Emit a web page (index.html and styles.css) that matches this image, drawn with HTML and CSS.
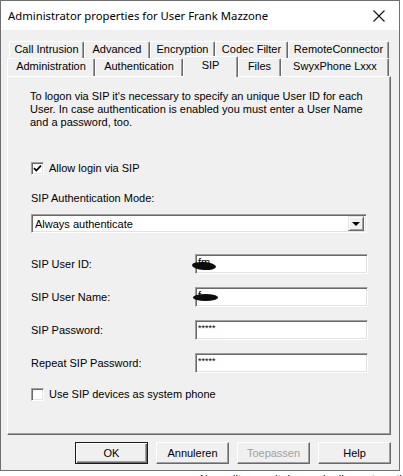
FILE: index.html
```html
<!DOCTYPE html>
<html lang="en">
<head>
<meta charset="UTF-8">
<title>Administrator properties for User Frank Mazzone</title>
<link rel="stylesheet" href="styles.css">
</head>
<body>
  <div class="window">
    <div class="titlebar">
      <span class="title">Administrator properties for User Frank Mazzone</span>
      <svg class="close" width="12" height="12" viewBox="0 0 12 12">
        <path d="M0.5 0.5L11.5 11.5M11.5 0.5L0.5 11.5" stroke="#111" stroke-width="1.1" fill="none"/>
      </svg>
    </div>

    <div class="client">
      <div class="tabrow back">
        <div class="tab" style="width:75px">Call Intrusion</div>
        <div class="tab" style="width:66px">Advanced</div>
        <div class="tab" style="width:65px">Encryption</div>
        <div class="tab" style="width:73px">Codec Filter</div>
        <div class="tab" style="width:101px">RemoteConnector</div>
      </div>
      <div class="tabrow front">
        <div class="tab" style="width:88px">Administration</div>
        <div class="tab" style="width:88px">Authentication</div>
        <div class="tab selected" style="width:55px">SIP</div>
        <div class="tab" style="width:43px">Files</div>
        <div class="tab" style="width:108px">SwyxPhone Lxxx</div>
      </div>

      <div class="panel">
        <p class="intro">To logon via SIP it's necessary to specify an unique User ID for each<br>User. In case authentication is enabled you must enter a User Name<br>and a password, too.</p>

        <label class="check first">
          <span class="box">
            <svg width="9" height="9" viewBox="0 0 9 9"><path d="M1 4.2L3.3 6.6L8 1.6" stroke="#000" stroke-width="1.7" fill="none"/></svg>
          </span>
          Allow login via SIP
        </label>

        <div class="mode-label">SIP Authentication Mode:</div>
        <div class="combo">
          <span class="combo-text">Always authenticate</span>
          <span class="combo-btn"><span class="arrow"></span></span>
        </div>

        <div class="field first-field">
          <span class="label">SIP User ID:</span>
          <span class="input">fm<span class="blob one"></span></span>
        </div>
        <div class="field">
          <span class="label">SIP User Name:</span>
          <span class="input">f<span class="blob two"></span></span>
        </div>
        <div class="field">
          <span class="label">SIP Password:</span>
          <span class="input stars">*****</span>
        </div>
        <div class="field">
          <span class="label">Repeat SIP Password:</span>
          <span class="input stars">*****</span>
        </div>

        <label class="check last">
          <span class="box"></span>
          Use SIP devices as system phone
        </label>
      </div>

      <div class="buttons">
        <button class="btn default">OK</button>
        <button class="btn">Annuleren</button>
        <button class="btn disabled">Toepassen</button>
        <button class="btn">Help</button>
      </div>
    </div>
  </div>
  <div class="behind">Normaliter wordt deze gebruiker automatisch</div>
</body>
</html>
```

FILE: styles.css
```css
body {
    margin: 0;
    background: #fff;
    font-family: "Liberation Sans", Arial, sans-serif;
    font-size: 11px;
    color: #000;
    height: 476px;
    overflow: hidden;
}
.window {
    width: 398px;
    border: 1px solid #6f6f6f;
    background: #f0f0f0;
}
.titlebar {
    height: 29px;
    background: #fff;
    display: flex;
    align-items: center;
    justify-content: space-between;
    padding: 0 14px 0 7px;
}
.title {
    font-family: "Noto Sans", sans-serif;
    font-size: 11.3px;
    color: #000;
}
.client {
    padding: 11px 8px 6px 6px;
}
.tabrow {
    display: flex;
}
.tabrow.back {
    height: 17px;
    margin-left: 2px;
}
.tabrow.front {
    height: 18px;
    align-items: flex-end;
}
.tab {
    box-sizing: border-box;
    height: 100%;
    border-top: 1px solid #fff;
    border-left: 1px solid #fff;
    border-right: 1px solid #696969;
    box-shadow: inset -1px 0 0 #a0a0a0;
    border-radius: 2px 2px 0 0;
    background: #f0f0f0;
    text-align: center;
    line-height: 15px;
    white-space: nowrap;
}
.tab.selected {
    position: relative;
    z-index: 1;
    height: 21px;
    margin-bottom: -1px;
    padding-top: 1px;
}
.panel {
    box-sizing: border-box;
    width: 384px;
    height: 359px;
    border: 1px solid;
    border-color: #fff #696969 #696969 #fff;
    box-shadow: inset -1px -1px 0 #a0a0a0;
    padding: 13px 22px 0 23px;
}
.intro {
    margin: 0 0 0 -1px;
    line-height: 13px;
}
.check {
    display: flex;
    align-items: center;
    gap: 5px;
    height: 13px;
    line-height: 13px;
}
.check.first {
    margin-top: 33px;
}
.check.last {
    margin-top: 15px;
}
.box {
    box-sizing: border-box;
    width: 13px;
    height: 13px;
    background: #fff;
    border: 1px solid;
    border-color: #a0a0a0 #fff #fff #a0a0a0;
    box-shadow: inset 1px 1px 0 #696969, inset -1px -1px 0 #e3e3e3;
    display: flex;
    align-items: center;
    justify-content: center;
}
.mode-label {
    margin-top: 17px;
    line-height: 13px;
}
.combo {
    box-sizing: border-box;
    margin-top: 9px;
    width: 336px;
    height: 19px;
    background: #fff;
    border: 1px solid;
    border-color: #a0a0a0 #fff #fff #a0a0a0;
    box-shadow: inset 1px 1px 0 #696969, inset -1px -1px 0 #e3e3e3;
    display: flex;
    align-items: center;
    padding: 2px 2px 2px 3px;
}
.combo-text {
    flex: 1;
}
.combo-btn {
    box-sizing: border-box;
    width: 16px;
    height: 15px;
    background: #f0f0f0;
    border: 1px solid;
    border-color: #e3e3e3 #696969 #696969 #e3e3e3;
    box-shadow: inset 1px 1px 0 #fff, inset -1px -1px 0 #a0a0a0;
    display: flex;
    align-items: center;
    justify-content: center;
}
.arrow {
    width: 0;
    height: 0;
    border-left: 4px solid transparent;
    border-right: 4px solid transparent;
    border-top: 4px solid #000;
}
.field {
    display: flex;
    align-items: center;
    height: 20px;
    margin-top: 13px;
}
.field.first-field {
    margin-top: 21px;
}
.label {
    width: 164px;
}
.input {
    position: relative;
    box-sizing: border-box;
    width: 173px;
    height: 20px;
    background: #fff;
    border: 1px solid;
    border-color: #a0a0a0 #fff #fff #a0a0a0;
    box-shadow: inset 1px 1px 0 #696969, inset -1px -1px 0 #e3e3e3;
    padding: 1px 0 0 2px;
    line-height: 13px;
}
.input.stars {
    font-size: 9px;
    padding-top: 1px;
}
.blob {
    position: absolute;
    background: #0c0c0c;
    border-radius: 50%;
}
.blob.one {
    left: -4px;
    top: 7px;
    width: 24px;
    height: 8px;
    transform: rotate(4deg);
}
.blob.two {
    left: -3px;
    top: 6px;
    width: 25px;
    height: 7px;
}
.buttons {
    display: flex;
    justify-content: flex-end;
    gap: 8px;
    margin-top: 7px;
}
.btn {
    box-sizing: border-box;
    width: 73px;
    height: 22px;
    background: #f0f0f0;
    border: 1px solid;
    border-color: #fff #696969 #696969 #fff;
    box-shadow: inset -1px -1px 0 #a0a0a0;
    font-family: "Liberation Sans", Arial, sans-serif;
    font-size: 11px;
    color: #000;
    padding: 0;
}
.btn.default {
    border: 1px solid #1a1a1a;
    box-shadow: inset 1px 1px 0 #fff, inset -1px -1px 0 #696969, inset -2px -2px 0 #a0a0a0;
}
.btn.disabled {
    color: #a0a0a0;
}
.behind {
    padding-left: 200px;
    margin-top: 2px;
    line-height: 13px;
    white-space: nowrap;
}
```
